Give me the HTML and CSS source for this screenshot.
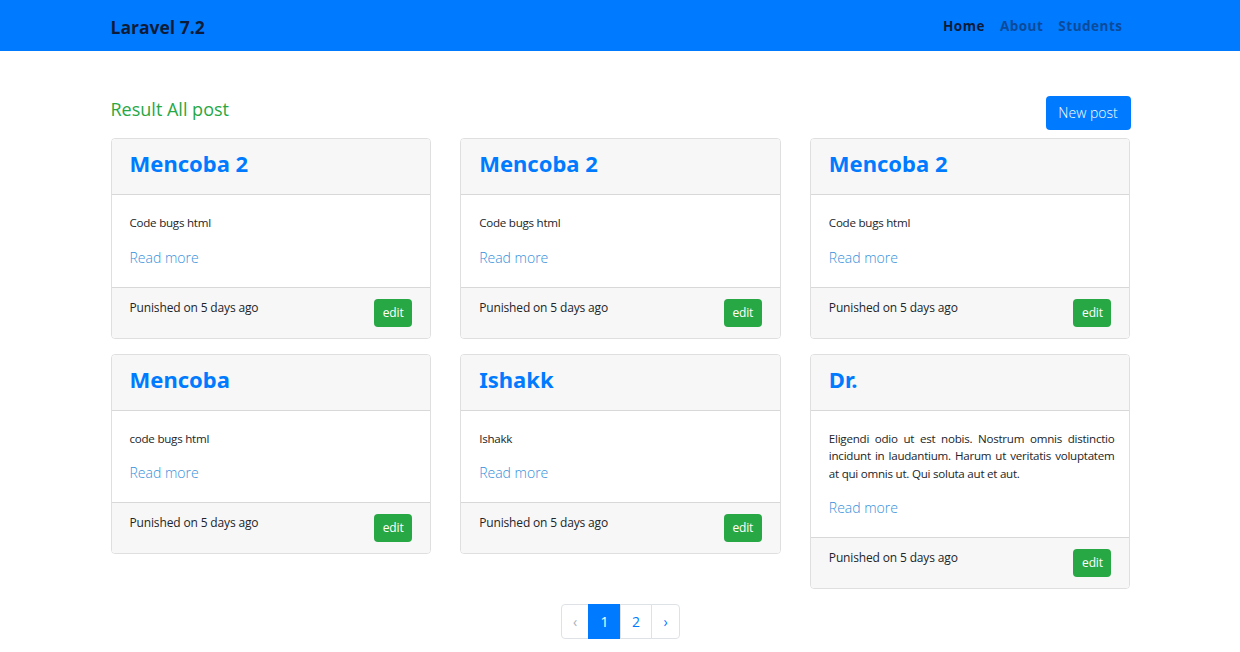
FILE: index.html
```html
<!DOCTYPE html>
<html lang="en">
<head>
<meta charset="utf-8">
<title>Laravel 7.2</title>
<link rel="stylesheet" href="styles.css">
</head>
<body>
<nav class="navbar">
  <div class="container nav-inner">
    <a class="brand" href="#">Laravel 7.2</a>
    <ul class="nav-links">
      <li><a class="active" href="#">Home</a></li>
      <li><a href="#">About</a></li>
      <li><a href="#">Students</a></li>
    </ul>
  </div>
</nav>
<main class="container main">
  <div class="top-row">
    <h4 class="result">Result All post</h4>
    <a class="btn btn-primary" href="#">New post</a>
  </div>
  <div class="grid">
    <div class="card">
      <div class="card-header"><h3>Mencoba 2</h3></div>
      <div class="card-body"><p>Code bugs html</p><a class="read" href="#">Read more</a></div>
      <div class="card-footer"><span>Punished on 5 days ago</span><a class="btn btn-success" href="#">edit</a></div>
    </div>
    <div class="card">
      <div class="card-header"><h3>Mencoba 2</h3></div>
      <div class="card-body"><p>Code bugs html</p><a class="read" href="#">Read more</a></div>
      <div class="card-footer"><span>Punished on 5 days ago</span><a class="btn btn-success" href="#">edit</a></div>
    </div>
    <div class="card">
      <div class="card-header"><h3>Mencoba 2</h3></div>
      <div class="card-body"><p>Code bugs html</p><a class="read" href="#">Read more</a></div>
      <div class="card-footer"><span>Punished on 5 days ago</span><a class="btn btn-success" href="#">edit</a></div>
    </div>
    <div class="card">
      <div class="card-header"><h3>Mencoba</h3></div>
      <div class="card-body"><p>code bugs html</p><a class="read" href="#">Read more</a></div>
      <div class="card-footer"><span>Punished on 5 days ago</span><a class="btn btn-success" href="#">edit</a></div>
    </div>
    <div class="card">
      <div class="card-header"><h3>Ishakk</h3></div>
      <div class="card-body"><p>Ishakk</p><a class="read" href="#">Read more</a></div>
      <div class="card-footer"><span>Punished on 5 days ago</span><a class="btn btn-success" href="#">edit</a></div>
    </div>
    <div class="card">
      <div class="card-header"><h3>Dr.</h3></div>
      <div class="card-body"><p>Eligendi odio ut est nobis. Nostrum omnis distinctio incidunt in laudantium. Harum ut veritatis voluptatem at qui omnis ut. Qui soluta aut et aut.</p><a class="read" href="#">Read more</a></div>
      <div class="card-footer"><span>Punished on 5 days ago</span><a class="btn btn-success" href="#">edit</a></div>
    </div>
  </div>
  <nav class="pager">
    <ul class="pagination">
      <li class="page disabled"><span>&lsaquo;</span></li>
      <li class="page active"><span>1</span></li>
      <li class="page"><a href="#">2</a></li>
      <li class="page"><a href="#">&rsaquo;</a></li>
    </ul>
  </nav>
</main>
</body>
</html>
```
FILE: styles.css
```css
* { box-sizing: border-box; }
body {
  margin: 0;
  font-family: "Open Sans", "Noto Sans", sans-serif;
  font-size: 14px;
  color: #212529;
  background: #fff;
}
a { text-decoration: none; }
.container {
  width: 1021px;
  padding-left: 1px;
  margin: 0 auto;
}
.navbar {
  background: #007bff;
  height: 51px;
}
.nav-inner {
  display: flex;
  align-items: center;
  justify-content: space-between;
  height: 51px;
}
.brand {
  font-family: "Open Sans", sans-serif;
  font-weight: 700;
  font-size: 17.5px;
  color: #0d1b3a;
  margin-top: 3px;
}
.nav-links {
  list-style: none;
  display: flex;
  margin: 0;
  padding: 0;
}
.nav-links a {
  display: block;
  padding: 8px 7.5px;
  font-weight: 700;
  font-size: 13.5px;
  color: #0b4a9a;
  letter-spacing: 0.5px;
}
.nav-links a.active { color: #0d1b3a; }
.nav-links li:last-child a { padding-right: 8px; }
.main { padding-top: 45px; }
.top-row {
  display: flex;
  justify-content: space-between;
  align-items: flex-start;
  height: 42px;
}
.result {
  margin: 0;
  font-weight: 400;
  font-size: 18px;
  line-height: 26px;
  color: #28a745;
}
.btn {
  display: inline-block;
  border-radius: 4px;
  color: #fff;
  line-height: 1;
  white-space: nowrap;
}
.btn-primary {
  background: #007bff;
  font-size: 14px;
  font-weight: 300;
  height: 34px;
  width: 85px;
  line-height: 34px;
  text-align: center;
}
.btn-success {
  background: #28a745;
  font-size: 12px;
  height: 28px;
  width: 38px;
  line-height: 28px;
  text-align: center;
  margin-top: 3px;
}
.grid {
  display: grid;
  grid-template-columns: repeat(3, 1fr);
  column-gap: 29px;
  row-gap: 15px;
  align-items: start;
}
.card {
  border: 1px solid rgba(0,0,0,.125);
  border-radius: 4px;
  overflow: hidden;
}
.card-header {
  background: #f7f7f7;
  border-bottom: 1px solid rgba(0,0,0,.125);
  height: 56px;
  padding: 9px 18px;
}
.card-header h3 {
  margin: 0;
  font-family: "Noto Sans", sans-serif;
  font-weight: 700;
  font-size: 22px;
  color: #007bff;
  line-height: 30px;
}
.card-body {
  padding: 19px 18px;
}
.card-body p {
  margin: 0 -3px 16px 0;
  font-size: 11.6px;
  letter-spacing: -0.25px;
  line-height: 17.5px;
  text-align: justify;
}
.read {
  color: #3490dc;
  font-size: 14px;
  font-weight: 300;
  line-height: 20px;
  display: inline-block;
}
.card-footer {
  background: #f7f7f7;
  border-top: 1px solid rgba(0,0,0,.125);
  height: 51px;
  padding: 8px 18px;
  display: flex;
  justify-content: space-between;
  align-items: flex-start;
  font-size: 12px;
  letter-spacing: -0.15px;
}
.card-footer span { line-height: 24px; }
.pager {
  display: flex;
  justify-content: center;
  padding-top: 15px;
}
.pagination {
  list-style: none;
  display: flex;
  margin: 0;
  padding: 0;
}
.page span, .page a {
  display: block;
  height: 35px;
  line-height: 33px;
  text-align: center;
  border: 1px solid #dee2e6;
  margin-left: -1px;
  color: #007bff;
  font-size: 14px;
  background: #fff;
}
.page:first-child span { border-radius: 4px 0 0 4px; width: 28px; margin-left: 0; color: #aab0b6; }
.page:last-child a { border-radius: 0 4px 4px 0; width: 29px; }
.page.active span { background: #007bff; border-color: #007bff; color: #fff; width: 33px; }
.page:nth-child(3) a { width: 32px; }
```
